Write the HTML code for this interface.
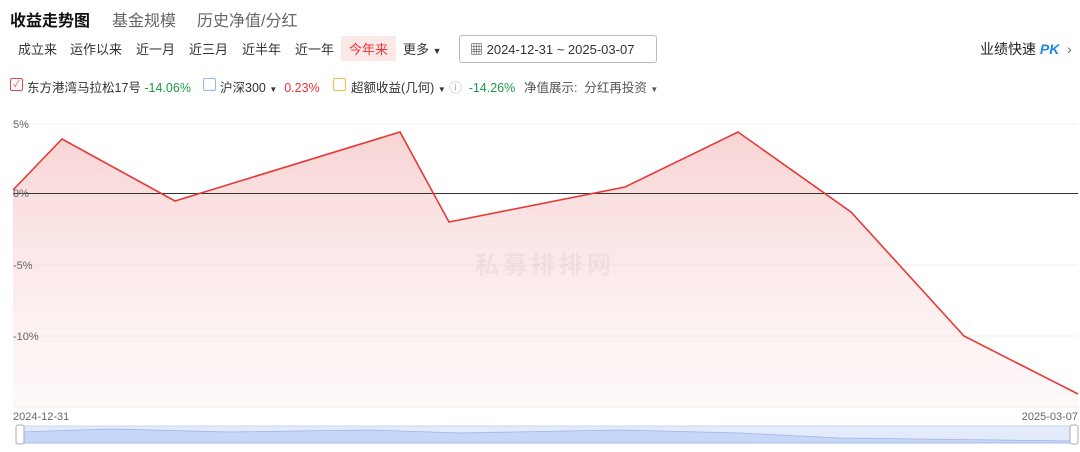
<!DOCTYPE html>
<html><head><meta charset="utf-8"><style>
body{margin:0;width:1080px;height:452px;background:#fff;font-family:"Liberation Sans","Noto Sans CJK SC",sans-serif;position:relative;overflow:hidden;color:#333}
.a{position:absolute;white-space:nowrap}
.tab{font-size:16px;top:7px}
.b{font-size:13px;top:39px}
.l{font-size:12.5px;top:77px}
</style></head><body>
<div class="a tab" style="left:10px;font-weight:bold;color:#111">收益走势图</div>
<div class="a tab" style="left:112px;color:#666">基金规模</div>
<div class="a tab" style="left:197px;color:#666">历史净值/分红</div>
<div class="a b" style="left:18px">成立来</div>
<div class="a b" style="left:70px">运作以来</div>
<div class="a b" style="left:136px">近一月</div>
<div class="a b" style="left:189px">近三月</div>
<div class="a b" style="left:242px">近半年</div>
<div class="a b" style="left:295px">近一年</div>
<div class="a" style="left:341px;top:36px;width:55px;height:25px;background:#fde8e8"></div>
<div class="a b" style="left:349px;color:#e33">今年来</div>
<div class="a b" style="left:403px">更多 <span style="font-size:9px">▼</span></div>
<div class="a" style="left:459px;top:35px;width:196px;height:26px;border:1px solid #bbb;border-radius:3px"></div>
<div class="a b" style="left:470px;top:39px">▦ 2024-12-31 ~ 2025-03-07</div>
<div class="a" style="left:980px;top:39px;font-size:14px;color:#222">业绩快速 <b style="color:#1e88e5;font-style:italic">PK</b> <span style="color:#666">&nbsp;›</span></div>
<div class="a" style="left:10px;top:78px;width:11px;height:11px;border:1px solid #e44;border-radius:2px;font-size:9px;color:#e44;line-height:11px;text-align:center">✓</div>
<div class="a l" style="left:27px">东方港湾马拉松17号 <span style="color:#1a9b4a">-14.06%</span></div>
<div class="a" style="left:203px;top:78px;width:11px;height:11px;border:1px solid #8bbcf5;border-radius:2px"></div>
<div class="a l" style="left:220px">沪深300 <span style="font-size:8px">▼</span> <span style="color:#e33">&nbsp;0.23%</span></div>
<div class="a" style="left:333px;top:78px;width:11px;height:11px;border:1px solid #f5b83d;border-radius:2px"></div>
<div class="a l" style="left:351px">超额收益(几何) <span style="font-size:8px">▼</span> <span style="color:#aaa">ⓘ</span> <span style="color:#1a9b4a">&nbsp;-14.26%</span></div>
<div class="a l" style="left:524px;color:#555">净值展示: &nbsp;分红再投资 <span style="font-size:8px">▼</span></div>
<svg class="a" style="left:0;top:0" width="1080" height="452">
<defs><linearGradient id="g" x1="0" y1="0" x2="0" y2="1"><stop offset="0" stop-color="#f6c9c9" stop-opacity=".8"/><stop offset="1" stop-color="#fbe9e9" stop-opacity=".3"/></linearGradient></defs>
<g stroke="#eee" stroke-width="1"><line x1="13" y1="124" x2="1078" y2="124"/><line x1="13" y1="265" x2="1078" y2="265"/><line x1="13" y1="336" x2="1078" y2="336"/><line x1="13" y1="407" x2="1078" y2="407"/></g>
<path d="M13,190 L62,139 L175,201 L400,132 L449,222 L625,187 L738,132 L851,212 L964,336 L1078,394 L1078,407 L13,407Z" fill="url(#g)"/>
<line x1="13" y1="193.5" x2="1078" y2="193.5" stroke="#333" stroke-width="1"/>
<path d="M13,190 L62,139 L175,201 L400,132 L449,222 L625,187 L738,132 L851,212 L964,336 L1078,394" fill="none" stroke="#e53935" stroke-width="1.6"/>
<g font-size="11" fill="#666"><text x="13" y="128">5%</text><text x="13" y="197">0%</text><text x="13" y="269">-5%</text><text x="13" y="340">-10%</text>
<text x="13" y="420">2024-12-31</text><text x="1078" y="420" text-anchor="end">2025-03-07</text></g>
<text x="545" y="273" font-size="24" font-weight="bold" fill="#000" opacity=".04" text-anchor="middle" letter-spacing="4">私募排排网</text>
<rect x="18" y="426" width="1058" height="17" fill="#e3ebfb" stroke="#c9d6f2"/>
<path d="M20,432 L110,429 L230,432 L370,430 L460,433 L620,430 L740,433 L840,438 L1074,441 L1074,443 L20,443Z" fill="#c6d7f7" stroke="#9db4e6" stroke-width=".8"/>
<rect x="16" y="425" width="8" height="19" rx="2" fill="#fff" stroke="#aab"/>
<rect x="1070" y="425" width="8" height="19" rx="2" fill="#fff" stroke="#aab"/>
</svg>
</body></html>
